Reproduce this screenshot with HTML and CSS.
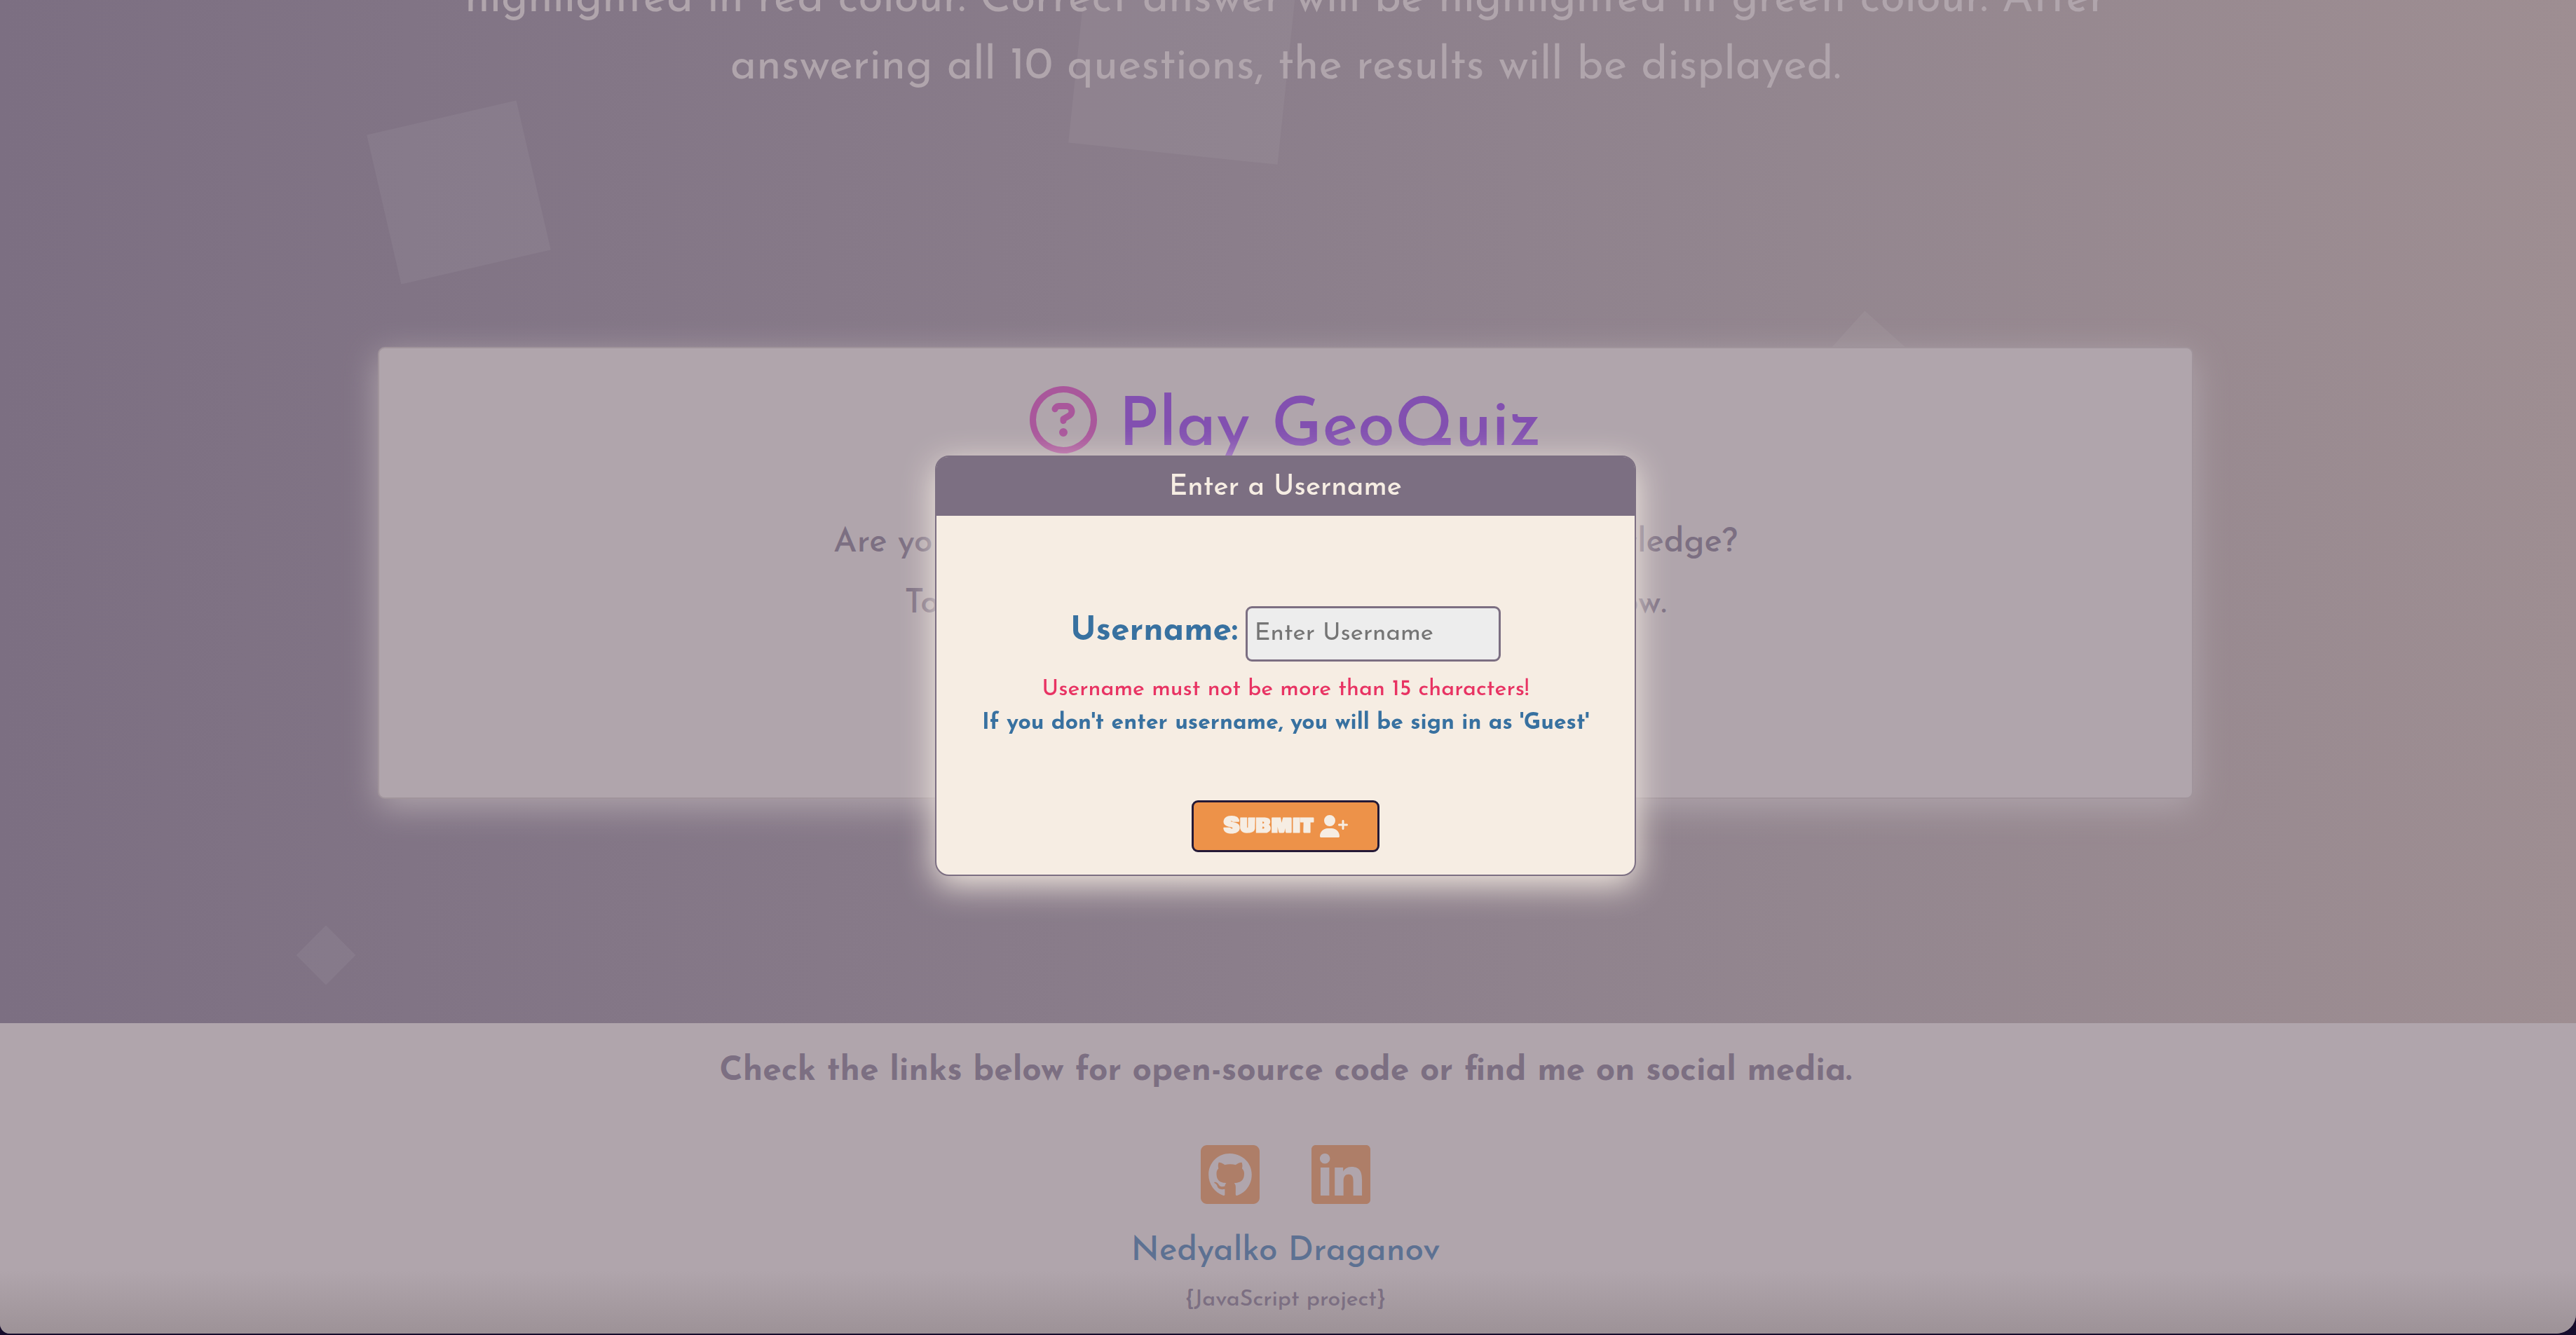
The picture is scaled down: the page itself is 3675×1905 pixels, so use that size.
FILE: index.html
```html
<!DOCTYPE html>
<html lang="en">
<head>
<meta charset="utf-8">
<title>GeoQuiz</title>
<link rel="stylesheet" href="styles.css">
</head>
<body>
<div class="app">
  <main class="main">
    <ul class="shapes" aria-hidden="true">
      <li class="shape shape-tilted"></li>
      <li class="shape shape-large"></li>
      <li class="shape shape-peak"></li>
      <li class="shape shape-small"></li>
    </ul>
    <section class="intro">
      <p class="intro-text">highlighted in red colour. Correct answer will be highlighted in green colour. After<br>answering all 10 questions, the results will be displayed.</p>
    </section>
    <section class="card">
      <h2 class="card-title">
        <svg class="card-icon" viewBox="0 0 512 512" aria-hidden="true"><path d="M464 256A208 208 0 1 0 48 256a208 208 0 1 0 416 0zM0 256a256 256 0 1 1 512 0A256 256 0 1 1 0 256zm169.8-90.7c7.9-22.3 29.1-37.3 52.8-37.3h58.3c34.9 0 63.1 28.3 63.1 63.1c0 22.6-12.1 43.5-31.7 54.8L280 264.4c-.2 13-10.9 23.6-24 23.6c-13.3 0-24-10.7-24-24V250.5c0-8.6 4.6-16.5 12.1-20.8l44.3-25.4c4.7-2.7 7.6-7.7 7.6-13.1c0-8.4-6.8-15.1-15.1-15.1H222.6c-3.4 0-6.4 2.1-7.5 5.3l-.4 1.2c-4.4 12.5-18.2 19-30.6 14.6s-19-18.2-14.6-30.6l.4-1.2zM224 352a32 32 0 1 1 64 0 32 32 0 1 1 -64 0z"/></svg>
        Play GeoQuiz
      </h2>
      <p class="card-text">Are you ready to put to test your geographical knowledge?<br>To start the quiz, just press the play button below.</p>
    </section>
  </main>
  <footer class="footer">
    <h3 class="footer-title">Check the links below for open-source code or find me on social media.</h3>
    <nav class="social">
      <a href="#github" aria-label="GitHub"><svg viewBox="0 32 448 448"><path d="M400 32H48C21.5 32 0 53.5 0 80v352c0 26.5 21.5 48 48 48h352c26.5 0 48-21.5 48-48V80c0-26.5-21.5-48-48-48zM277.3 415.7c-8.4 1.5-11.5-3.7-11.5-8 0-5.4.2-33 .2-55.3 0-15.6-5.2-25.5-11.3-30.7 37-4.1 76-9.2 76-73.1 0-18.2-6.5-27.3-17.1-39 1.7-4.3 7.4-22-1.7-45-13.9-4.3-45.7 17.9-45.7 17.9-13.2-3.7-27.5-5.6-41.6-5.6-14.1 0-28.4 1.9-41.6 5.6 0 0-31.8-22.2-45.7-17.9-9.1 22.9-3.5 40.6-1.7 45-10.6 11.7-15.6 20.8-15.6 39 0 63.6 37.3 69 74.3 73.1-4.8 4.3-9.1 11.7-10.6 22.3-9.5 4.3-33.8 11.7-48.3-13.9-9.1-15.8-25.5-17.1-25.5-17.1-16.2-.2-1.1 10.2-1.1 10.2 10.8 5 18.4 24.2 18.4 24.2 9.7 29.7 56.1 19.7 56.1 19.7 0 13.9.2 36.5.2 40.6 0 4.3-3 9.5-11.5 8-66-22.1-112.2-84.9-112.2-158.3 0-91.8 70.2-161.5 162-161.5S388 165.6 388 257.4c.1 73.4-44.7 136.3-110.7 158.3z"/></svg></a>
      <a href="#linkedin" aria-label="LinkedIn"><svg viewBox="0 32 448 448"><path d="M416 32H31.9C14.3 32 0 46.5 0 64.3v383.4C0 465.5 14.3 480 31.9 480H416c17.6 0 32-14.5 32-32.3V64.3c0-17.8-14.4-32.3-32-32.3zM135.4 416H69V202.2h66.5V416zm-33.2-243c-21.3 0-38.5-17.3-38.5-38.5S80.9 96 102.2 96c21.2 0 38.5 17.3 38.5 38.5 0 21.3-17.2 38.5-38.5 38.5zm282.1 243h-66.4V312c0-24.8-.5-56.7-34.5-56.7-34.6 0-39.9 27-39.9 54.9V416h-66.4V202.2h63.7v29.2h.9c8.9-16.8 30.6-34.5 62.9-34.5 67.2 0 79.7 44.3 79.7 101.9V416z"/></svg></a>
    </nav>
    <p class="author">Nedyalko Draganov</p>
    <p class="project">{JavaScript project}</p>
  </footer>
</div>
<div class="overlay">
  <form class="modal" role="dialog" aria-labelledby="modal-title">
    <h2 class="modal-title" id="modal-title">Enter a Username</h2>
    <div class="field">
      <label class="field-label" for="username">Username:</label>
      <input class="field-input" id="username" type="text" placeholder="Enter Username">
    </div>
    <p class="note note-warning">Username must not be more than 15 characters!</p>
    <p class="note note-guest">If you don't enter username, you will be sign in as 'Guest'</p>
    <button class="submit" type="button">Submit
      <svg viewBox="0 0 640 512" aria-hidden="true"><path d="M96 128a128 128 0 1 1 256 0A128 128 0 1 1 96 128zM0 482.3C0 383.8 79.8 304 178.3 304h91.4C368.2 304 448 383.8 448 482.3c0 16.4-13.3 29.7-29.7 29.7H29.7C13.3 512 0 498.7 0 482.3zM504 312V248H440c-13.3 0-24-10.7-24-24s10.7-24 24-24h64V136c0-13.3 10.7-24 24-24s24 10.7 24 24v64h64c13.3 0 24 10.7 24 24s-10.7 24-24 24H552v64c0 13.3-10.7 24-24 24s-24-10.7-24-24z"/></svg>
    </button>
  </form>
</div>
</body>
</html>
```
FILE: styles.css
```css
* {
  box-sizing: border-box;
  margin: 0;
  padding: 0;
}

body {
  background: #160c2c;
  color: #7c6f82;
  font-family: "Josefin Sans", Lato, sans-serif;
  font-weight: 500;
  text-align: center;
}

.app {
  display: flex;
  flex-direction: column;
  min-height: calc(100vh - 2px);
  border-radius: 0 0 28px 14px;
  overflow: hidden;
  background: linear-gradient(90deg, #7c6f82, #8b7e8b 48%, #93868f 70%, #9e8e92);
}

.main {
  position: relative;
  flex: 1;
  display: flex;
  flex-direction: column;
  align-items: center;
  padding: 0 7px 320px 0;
}

/* Decorative squares floating behind the content */
.shapes {
  list-style: none;
}

.shape {
  position: absolute;
  background: rgba(255, 255, 255, 0.05);
}

.shape-tilted {
  left: 545px;
  top: 165px;
  width: 219px;
  height: 219px;
  transform: rotate(-13deg);
}

.shape-large {
  left: 1539px;
  top: -80px;
  width: 300px;
  height: 300px;
  transform: rotate(6deg);
}

.shape-peak {
  left: 2614px;
  top: 464px;
  width: 100px;
  height: 100px;
  transform: rotate(42deg);
}

.shape-small {
  left: 435px;
  top: 1333px;
  width: 60px;
  height: 60px;
  transform: rotate(45deg);
}

.intro {
  position: relative;
  display: flex;
  align-items: flex-end;
  height: 495px;
  padding-bottom: 351px;
}

.intro-text {
  color: #b0a5ac;
  font-size: 64px;
  font-weight: 400;
  line-height: 96px;
}

.card {
  position: relative;
  width: 70.6%;
  min-height: 645px;
  padding-top: 54px;
  background: #b0a5ac;
  border: 2px solid #a0949b;
  border-radius: 10px;
  box-shadow: 0 12px 48px #b0a5ac;
}

.card-title {
  color: #8250b0;
  font-size: 96px;
  font-weight: 500;
  line-height: 120px;
}

.card-icon {
  width: 96px;
  height: 96px;
  vertical-align: -12px;
  fill: #a9579b;
}

.card-text {
  margin-top: 61px;
  font-size: 48px;
  line-height: 87px;
}

.footer {
  position: relative;
  display: flex;
  flex-direction: column;
  align-items: center;
  padding: 37px 7px 30px 0;
  background: linear-gradient(to top, #9d9297, #b0a5ac 90px);
}

.footer-title {
  font-size: 48px;
  font-weight: 700;
  line-height: 64px;
}

.social {
  display: flex;
  gap: 74px;
  margin-top: 73px;
}

.social svg {
  display: block;
  width: 84px;
  height: 84px;
  fill: #ae7e68;
}

.author {
  margin-top: 36px;
  color: #5d7192;
  font-size: 48px;
  line-height: 64px;
}

.project {
  margin-top: 19px;
  font-size: 32px;
  line-height: 36px;
}

.overlay {
  position: fixed;
  inset: 0;
  display: grid;
  place-items: center;
  padding: 0 7px 6px 0;
}

.modal {
  display: flex;
  flex-direction: column;
  align-items: center;
  width: 1000px;
  min-height: 600px;
  background: #f6ede3;
  border: 2px solid #7c6f82;
  border-radius: 20px;
  box-shadow: 0 12px 48px #f6ede3;
}

.modal-title {
  align-self: stretch;
  padding-top: 4px;
  background: #7c6f82;
  border-radius: 17px 17px 0 0;
  color: #f6ede3;
  font-size: 40px;
  font-weight: 500;
  line-height: 80px;
}

.field {
  display: flex;
  align-items: flex-start;
  gap: 11px;
  margin-top: 129px;
}

.field-label {
  color: #3871a0;
  font-size: 48px;
  font-weight: 700;
  line-height: 72px;
}

.field-input {
  width: 364px;
  height: 79px;
  padding: 0 10px;
  background: #ededed;
  border: 3px solid #7c6f82;
  border-radius: 9px;
  font: inherit;
  font-size: 35px;
  font-weight: 400;
}

.field-input::placeholder {
  color: #757575;
}

.note {
  font-size: 32px;
  line-height: 48px;
}

.note-warning {
  margin-top: 16px;
  color: #e83363;
}

.note-guest {
  color: #3871a0;
  font-weight: 700;
}

.submit {
  display: flex;
  justify-content: center;
  align-items: center;
  gap: 9px;
  width: 268px;
  height: 74px;
  margin-top: 86px;
  background: #ed9249;
  border: 3px solid #241937;
  border-radius: 9px;
  color: #f6ede3;
  font-family: "Bowlby One SC", Lato, sans-serif;
  font-size: 32px;
  font-weight: 700;
}

.submit svg {
  width: 40px;
  height: 32px;
  fill: #f6ede3;
}
```
